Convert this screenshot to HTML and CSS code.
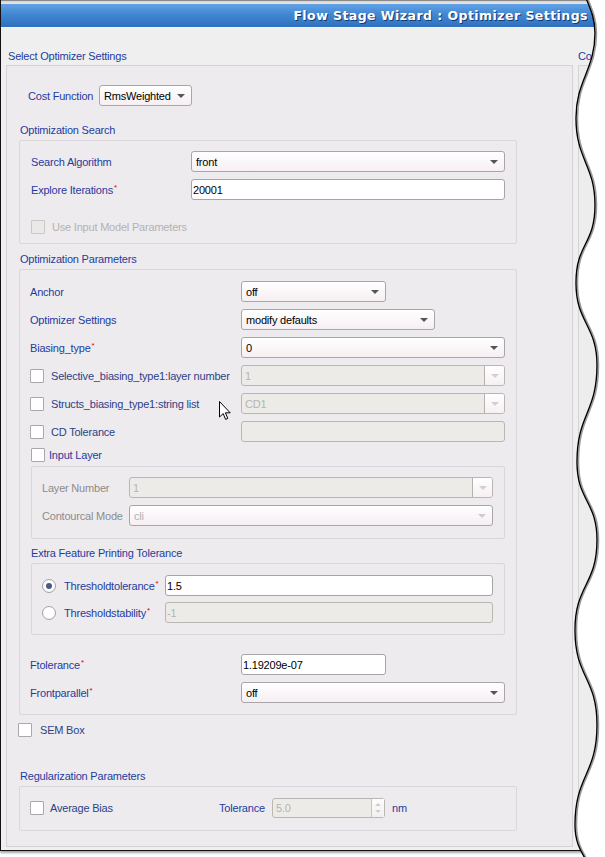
FILE: index.html
```html
<!DOCTYPE html>
<html>
<head>
<meta charset="utf-8">
<title>Flow Stage Wizard : Optimizer Settings</title>
<link rel="stylesheet" href="styles.css">
</head>
<body>
<div class="page">
  <div class="topstrip"></div>
  <div class="titlebar"><span class="title">Flow Stage Wizard : Optimizer Settings</span></div>
  <div class="content">
    <div class="leftcol">
      <div class="heading h-top">Select Optimizer Settings</div>
      <div class="panel">
        <div class="row r-cost">
          <span class="lbl l-cost">Cost Function</span>
          <div class="combo c-cost"><span class="val">RmsWeighted</span><i class="arr"></i></div>
        </div>

        <div class="heading h-sec h-s1">Optimization Search</div>
        <div class="group g-search">
          <div class="row">
            <span class="lbl l-search">Search Algorithm</span>
            <div class="combo fill"><span class="val">front</span><i class="arr"></i></div>
          </div>
          <div class="row m7">
            <span class="lbl l-search">Explore Iterations<sup class="req">*</sup></span>
            <div class="text fill"><span class="val">20001</span></div>
          </div>
          <div class="row m16">
            <span class="cb dis"></span>
            <span class="lbl dim l-use">Use Input Model Parameters</span>
          </div>
        </div>

        <div class="heading h-sec h-s2">Optimization Parameters</div>
        <div class="group g-params">
          <div class="row">
            <span class="lbl l-param">Anchor</span>
            <div class="combo c-anchor"><span class="val">off</span><i class="arr"></i></div>
          </div>
          <div class="row m7">
            <span class="lbl l-param">Optimizer Settings</span>
            <div class="combo c-opt"><span class="val">modify defaults</span><i class="arr"></i></div>
          </div>
          <div class="row m7">
            <span class="lbl l-param">Biasing_type<sup class="req">*</sup></span>
            <div class="combo fill"><span class="val">0</span><i class="arr"></i></div>
          </div>
          <div class="row m7">
            <span class="cb"></span>
            <span class="lbl cbl l-cbp">Selective_biasing_type1:layer number</span>
            <div class="combo dis fill"><span class="val">1</span><span class="btn"><i class="arr"></i></span></div>
          </div>
          <div class="row m7">
            <span class="cb"></span>
            <span class="lbl cbl l-cbp">Structs_biasing_type1:string list</span>
            <div class="combo dis fill"><span class="val">CD1</span><span class="btn"><i class="arr"></i></span></div>
          </div>
          <div class="row m7">
            <span class="cb"></span>
            <span class="lbl cbl l-cbp">CD Tolerance</span>
            <div class="text dis fill"><span class="val"></span></div>
          </div>
          <div class="row small m6 ind1">
            <span class="cb"></span>
            <span class="lbl l-input">Input Layer</span>
          </div>
          <div class="group g-inner">
            <div class="row">
              <span class="lbl grey l-layer">Layer Number</span>
              <div class="combo dis fill"><span class="val">1</span><span class="btn"><i class="arr"></i></span></div>
            </div>
            <div class="row m7">
              <span class="lbl grey l-layer">Contourcal Mode</span>
              <div class="combo fill faded"><span class="val">cli</span><i class="arr"></i></div>
            </div>
          </div>
          <div class="heading h-extra">Extra Feature Printing Tolerance</div>
          <div class="group g-extra">
            <div class="row">
              <span class="radio on"></span>
              <span class="lbl l-radio">Thresholdtolerance<sup class="req">*</sup></span>
              <div class="text fill"><span class="val">1.5</span></div>
            </div>
            <div class="row m6">
              <span class="radio"></span>
              <span class="lbl l-radio">Thresholdstability<sup class="req">*</sup></span>
              <div class="text dis fill"><span class="val">-1</span></div>
            </div>
          </div>
          <div class="row m19">
            <span class="lbl l-param">Ftolerance<sup class="req">*</sup></span>
            <div class="text c-anchor"><span class="val">1.19209e-07</span></div>
          </div>
          <div class="row m7">
            <span class="lbl l-param">Frontparallel<sup class="req">*</sup></span>
            <div class="combo fill"><span class="val">off</span><i class="arr"></i></div>
          </div>
        </div>

        <div class="row small r-sem">
          <span class="cb"></span>
          <span class="lbl cbl l-sem">SEM Box</span>
        </div>

        <div class="heading h-sec h-s3">Regularization Parameters</div>
        <div class="group g-reg">
          <div class="row r20">
            <span class="cb"></span>
            <span class="lbl cbl l-avg">Average Bias</span>
            <span class="lbl l-tol">Tolerance</span>
            <div class="spin"><span class="val">5.0</span><span class="sbtn"><i class="up"></i><i class="dn"></i></span></div>
            <span class="lbl l-nm">nm</span>
          </div>
        </div>
      </div>
    </div>
    <div class="rightcol">
      <div class="heading h-top">Com</div>
      <div class="rpanel"></div>
    </div>
  </div>

  <svg class="cursor" width="13" height="20" viewBox="0 0 13 20">
    <path d="M0.5,0.5 V16 L4.2,12.6 L6.6,18.4 L8.8,17.4 L6.4,11.8 H11.2 Z" fill="#fff" stroke="#000" stroke-width="1"/>
  </svg>

  <svg class="torn" width="45" height="857" viewBox="560 0 45 857">
    <path d="M586,-2 C590,8 595,18 595,33 C595,70 576,80 576,118 C576,160 595,165 595,205 C595,245 576,243 576,283 C576,323 597,325 597,365 C597,413 577,414 577,462 C577,501 597,501 597,540 C597,585 575,585 575,630 C575,678 597,677 597,725 C597,775 575,775 575,825 C575,841 580,850 586,860 L610,860 L610,-2 Z" fill="#fff"/>
    <path d="M587.5,-2 C591.5,8 596.5,18 596.5,33 C596.5,70 577.5,80 577.5,118 C577.5,160 596.5,165 596.5,205 C596.5,245 577.5,243 577.5,283 C577.5,323 598.5,325 598.5,365 C598.5,413 578.5,414 578.5,462 C578.5,501 598.5,501 598.5,540 C598.5,585 576.5,585 576.5,630 C576.5,678 598.5,677 598.5,725 C598.5,775 576.5,775 576.5,825 C576.5,841 581.5,850 587.5,860" fill="none" stroke="#9a9a9a" stroke-width="1.5"/>
    <path d="M586,-2 C590,8 595,18 595,33 C595,70 576,80 576,118 C576,160 595,165 595,205 C595,245 576,243 576,283 C576,323 597,325 597,365 C597,413 577,414 577,462 C577,501 597,501 597,540 C597,585 575,585 575,630 C575,678 597,677 597,725 C597,775 575,775 575,825 C575,841 580,850 586,860" fill="none" stroke="#000" stroke-width="1.4"/>
  </svg>
</div>
</body>
</html>
```

FILE: styles.css
```css
* { box-sizing: border-box; margin: 0; padding: 0; }
html, body { width: 605px; height: 857px; overflow: hidden; background: #fff; }
body {
  font-family: "Liberation Sans", Arial, sans-serif;
  font-size: 11px;
  letter-spacing: -0.2px;
  color: #000;
}

.page {
  position: relative;
  width: 605px;
  height: 851px;
  border-left: 1px solid #111;
  border-bottom: 1px solid #111;
  box-shadow: 0 2px 2px rgba(0,0,0,0.35);
  background: #efefef;
  display: flex;
  flex-direction: column;
}

.topstrip {
  height: 4px;
  background: linear-gradient(#8a8a8a 0, #8a8a8a 1px, #d6d6d6 1px, #e6e6e6 4px);
}
.titlebar {
  height: 24px;
  background: linear-gradient(#62a2e6 0%, #4287d2 45%, #2f70bf 100%);
  border-bottom: 1px solid #f4f4f4;
  text-align: right;
  padding-right: 17px;
}
.title {
  font-family: "DejaVu Sans", Verdana, sans-serif;
  font-weight: bold;
  font-size: 12.5px;
  letter-spacing: 0.45px;
  line-height: 23px;
  color: #fff;
  text-shadow: 1px 1px 0 #173a6e;
}

.content {
  flex: 1;
  display: flex;
  padding: 21px 0 0 5px;
}
.leftcol { width: 567px; flex-shrink: 0; }
.rightcol { width: 40px; flex-shrink: 0; margin-left: 5px; overflow: hidden; }

.heading {
  height: 14px;
  line-height: 14px;
  color: #1e3c9e;
  white-space: nowrap;
}
.h-top { margin-left: 2px; }
.rightcol .h-top { margin-left: 0; }

.panel {
  margin-top: 2px;
  height: 782px;
  border: 1px solid #d6d2d6;
  background: #eeebee;
}
.rpanel {
  margin-top: 2px;
  height: 782px;
  border: 1px solid #d6d2d6;
  background: #ededed;
}

.row {
  display: flex;
  align-items: center;
  height: 21px;
  white-space: nowrap;
}
.row.small { height: 14px; }
.row.r20 { height: 20px; }
.m6 { margin-top: 6px; }
.m7 { margin-top: 7px; }
.m16 { margin-top: 16px; }
.m19 { margin-top: 19px; }

.lbl { color: #1e3c9e; flex-shrink: 0; }
.lbl.cbl { color: #2b4286; }
.lbl.dim { color: #b2b2b2; }
.lbl.grey { color: #8c8c8c; }

.req {
  color: #e00000;
  font-size: 8px;
  letter-spacing: 0;
  vertical-align: 4px;
  line-height: 0;
  margin-left: 1px;
}

/* cost row */
.r-cost { margin-top: 19px; padding-left: 21px; }
.l-cost { width: 71px; }
.c-cost { width: 93px; }

.h-sec { margin-left: 13px; }
.h-s1 { margin-top: 17px; }
.h-s2 { margin-top: 8px; }
.h-s3 { margin-top: 32px; }

.group {
  border: 1px solid #dad6da;
  border-radius: 2px;
}
.g-search {
  margin: 3px 0 0 12px;
  width: 498px;
  padding: 10px 11px 6px 11px;
}
.l-search { width: 160px; }
.l-use { margin-left: 7px; }

.g-params {
  margin: 3px 0 0 12px;
  width: 498px;
  padding: 11px 11px 11px 10px;
}
.l-param { width: 211px; }
.c-anchor { width: 145px; }
.c-opt { width: 194px; }
.l-cbp { width: 190px; margin-left: 7px; }

.ind1 { padding-left: 1px; }
.l-input { margin-left: 4px; color: #1e3c9e; }

.g-inner {
  margin: 4px 0 0 1px;
  padding: 10px 11px 12px 10px;
}
.l-layer { width: 87px; }

.h-extra { margin: 7px 0 0 1px; }
.g-extra {
  margin: 3px 0 0 1px;
  padding: 11px 11px 11px 10px;
}
.l-radio { width: 101px; margin-left: 8px; }

.r-sem { margin: 8px 0 0 11px; }
.l-sem { margin-left: 8px; }

.g-reg {
  margin: 3px 0 0 12px;
  width: 498px;
  padding: 11px 11px 12px 10px;
}
.l-avg { width: 169px; margin-left: 6px; }
.l-tol { width: 53px; }
.l-nm { margin-left: 7px; }

/* controls */
.fill { flex: 1; }
.val { white-space: nowrap; }

.combo {
  display: flex;
  align-items: center;
  height: 21px;
  border: 1px solid #a9a6a9;
  border-radius: 3px;
  background: linear-gradient(#ffffff, #f6eff3);
  padding-left: 4px;
}
.arr {
  display: block;
  width: 0;
  height: 0;
  margin-left: auto;
  margin-right: 6px;
  border-left: 4px solid transparent;
  border-right: 4px solid transparent;
  border-top: 4px solid #555;
}
.combo.faded .val { color: #b0b0b0; }
.combo.faded .arr { border-top-color: #cfcccf; }

.combo.dis {
  background: #edebe7;
  border-color: #bab7b2;
  padding-left: 3px;
}
.dis .val { color: #b4b4b4; }
.combo.dis .btn {
  margin-left: auto;
  width: 20px;
  height: 19px;
  border-left: 1px solid #b5b2ad;
  border-radius: 0 2px 2px 0;
  background: linear-gradient(#ffffff, #f6f0f3);
  display: flex;
  align-items: center;
  justify-content: center;
}
.combo.dis .btn .arr {
  margin: 0;
  border-top-color: #d2cfd2;
}

.text {
  display: flex;
  align-items: center;
  height: 21px;
  border: 1px solid #a6a4a6;
  border-radius: 3px;
  background: #fff;
  padding-left: 1px;
}
.text.dis {
  background: #edebe7;
  border-color: #bab7b2;
}

.cb {
  display: block;
  flex-shrink: 0;
  width: 14px;
  height: 14px;
  border: 1px solid #aaa8aa;
  border-radius: 1px;
  background: #fff;
}
.cb.dis {
  background: #ebe9e7;
  border-color: #cac8c6;
}

.radio {
  display: flex;
  align-items: center;
  justify-content: center;
  flex-shrink: 0;
  width: 14px;
  height: 14px;
  border-radius: 50%;
  border: 1px solid #a4a2a4;
  background: radial-gradient(circle at 50% 40%, #ffffff 50%, #eeeaee 100%);
}
.radio.on::after {
  content: "";
  width: 6px;
  height: 6px;
  border-radius: 50%;
  background: #4a5a85;
}

.spin {
  display: flex;
  align-items: center;
  width: 113px;
  height: 20px;
  border: 1px solid #bab7b2;
  border-radius: 3px;
  background: #edebe7;
  padding-left: 3px;
  color: #b4b4b4;
}
.sbtn {
  margin-left: auto;
  width: 13px;
  height: 18px;
  border-left: 1px solid #c8c5c0;
  background: linear-gradient(#fdfdfd, #f3eff1);
  display: flex;
  flex-direction: column;
  align-items: center;
  justify-content: space-around;
  padding: 2px 0;
}
.sbtn .up, .sbtn .dn {
  display: block;
  width: 0;
  height: 0;
  border-left: 3px solid transparent;
  border-right: 3px solid transparent;
}
.sbtn .up { border-bottom: 3px solid #d0cdd0; }
.sbtn .dn { border-top: 3px solid #d0cdd0; }

/* overlays */
.cursor {
  position: absolute;
  left: 218px;
  top: 401px;
}
.torn {
  position: absolute;
  top: 0;
  right: 0;
  width: 45px;
  height: 857px;
  overflow: visible;
}
```
